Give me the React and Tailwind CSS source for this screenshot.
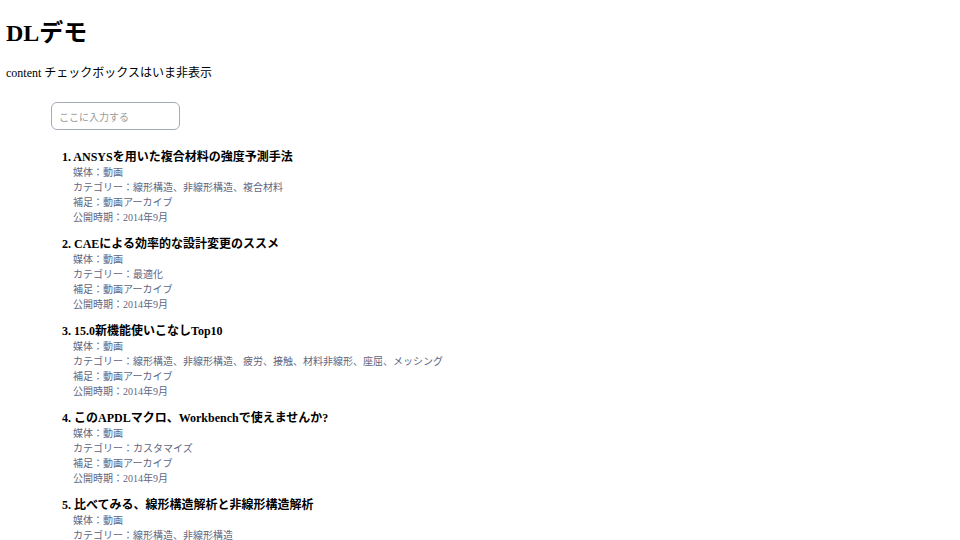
import React from "react";

const items = [
  {
    title: "ANSYSを用いた複合材料の強度予測手法",
    category: "線形構造、非線形構造、複合材料",
  },
  { title: "CAEによる効率的な設計変更のススメ", category: "最適化" },
  {
    title: "15.0新機能使いこなしTop10",
    category: "線形構造、非線形構造、疲労、接触、材料非線形、座屈、メッシング",
  },
  { title: "このAPDLマクロ、Workbenchで使えませんか?", category: "カスタマイズ" },
  { title: "比べてみる、線形構造解析と非線形構造解析", category: "線形構造、非線形構造" },
];

const serif = { fontFamily: '"Liberation Serif", "Noto Sans CJK JP", serif' };

export default function App() {
  return (
    <div className="px-[6px] pt-[15px] text-black" style={serif}>
      {/* Header */}
      <h1 className="text-[24px] font-bold leading-[36px]">DLデモ</h1>
      <p className="mt-[12px] text-[12px] leading-[20px]">content チェックボックスはいま非表示</p>

      {/* Search */}
      <div className="mt-[19px] pl-[45px]">
        <input
          type="text"
          placeholder="ここに入力する"
          className="w-[129px] h-[28px] rounded-[6px] border border-[#a5acb8] px-[7px] text-[10px] placeholder:text-[#9a9a9a] outline-none"
          style={{ fontFamily: '"Noto Sans CJK JP", sans-serif' }}
        />
      </div>

      {/* Results */}
      <ol className="mt-[19px] pl-[56px] flex flex-col gap-[11px]">
        {items.map((item, i) => (
          <li key={i}>
            <div className="text-[12px] font-bold leading-[16px]">
              {i + 1}. {item.title}
            </div>
            <div className="pl-[11px] text-[10px] leading-[15px] text-[#5f6680]">
              <div>媒体：動画</div>
              <div>カテゴリー：{item.category}</div>
              <div>補足：動画アーカイブ</div>
              <div>公開時期：2014年9月</div>
            </div>
          </li>
        ))}
      </ol>
    </div>
  );
}
